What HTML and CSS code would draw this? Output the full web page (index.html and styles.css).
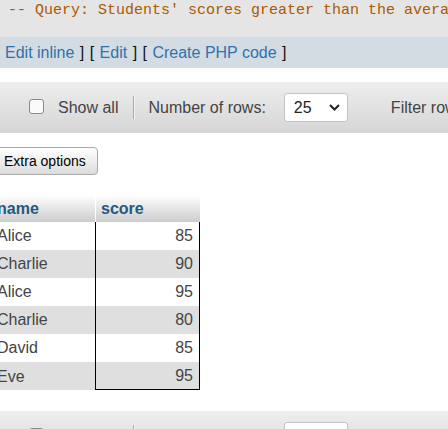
FILE: index.html
```html
<!DOCTYPE html>
<html>
<head>
<meta charset="utf-8">
<link rel="stylesheet" href="styles.css">
</head>
<body>
<div class="query"><code>-- Query: Students' scores greater than the average score</code></div>
<div class="links"><a href="#">Edit inline</a> ] [ <a href="#">Edit</a> ] [ <a href="#">Create PHP code</a> ]</div>

<div class="toolbar">
  <span class="check"></span>
  <span class="label">Show all</span>
  <span class="sep"></span>
  <span class="label">Number of rows:</span>
  <span class="select"><span>25</span><svg width="11" height="7" viewBox="0 0 11 7"><path d="M1 1 L5.5 5.5 L10 1" fill="none" stroke="#222" stroke-width="2"/></svg></span>
  <span class="label filter">Filter rows:</span>
</div>

<button class="extra">Extra options</button>

<table class="results">
  <thead>
    <tr><th class="name">name</th><th class="score">score</th></tr>
  </thead>
  <tbody>
    <tr><td class="name">Alice</td><td class="score">85</td></tr>
    <tr class="odd"><td class="name">Charlie</td><td class="score">90</td></tr>
    <tr><td class="name">Alice</td><td class="score">95</td></tr>
    <tr class="odd"><td class="name">Charlie</td><td class="score">80</td></tr>
    <tr><td class="name">David</td><td class="score">85</td></tr>
    <tr class="odd last"><td class="name">Eve</td><td class="score">95</td></tr>
  </tbody>
</table>

<div class="toolbar bottom">
  <span class="check"></span>
  <span class="label">Show all</span>
  <span class="sep"></span>
  <span class="label">Number of rows:</span>
  <span class="select"><span>25</span><svg width="11" height="7" viewBox="0 0 11 7"><path d="M1 1 L5.5 5.5 L10 1" fill="none" stroke="#222" stroke-width="2"/></svg></span>
  <span class="label filter">Filter rows:</span>
</div>
</body>
</html>
```

FILE: styles.css
```css
html, body {
  margin: 0;
  padding: 0;
  background: #fff;
  overflow: hidden;
}
body {
  font-family: "Liberation Sans", Arial, sans-serif;
  font-size: 16px;
  color: #444;
  white-space: nowrap;
}
.query {
  background: #e5e5e5;
  height: 37px;
  padding-left: 8px;
  box-sizing: border-box;
}
.query code {
  font-family: "Liberation Mono", "DejaVu Sans Mono", monospace;
  font-size: 15px;
  line-height: 18px;
  color: #aa5a00;
}
.links {
  background: #d3dce3;
  height: 31px;
  box-sizing: border-box;
  padding: 6px 5px 0 5px;
  line-height: 20px;
  color: #111;
  word-spacing: 1px;
}
.links a {
  color: #2f72ad;
  text-decoration: none;
  word-spacing: 0;
}
.toolbar {
  margin-top: 14px;
  height: 51px;
  display: flex;
  align-items: center;
  padding-left: 29px;
  background: linear-gradient(to bottom, #eeeeee, #d5d5d5);
  color: #444;
}
.toolbar > * {
  flex-shrink: 0;
}
.toolbar.bottom {
  margin-top: 21px;
}
.check {
  width: 15px;
  height: 15px;
  box-sizing: border-box;
  border: 1px solid #8a8a8a;
  border-radius: 3px;
  background: #fafafa;
  margin-right: 14px;
  margin-top: -2px;
}
.sep {
  width: 1px;
  height: 23px;
  background: #aaa;
  border-right: 1px solid #f4f4f4;
  margin: 0 13px 0 15px;
}
.select {
  display: flex;
  align-items: center;
  width: 64px;
  height: 29px;
  box-sizing: border-box;
  border: 1px solid #c4c4c4;
  border-radius: 3px;
  background: #fff;
  padding: 0 7px 0 9px;
  margin-left: 18px;
  color: #222;
}
.select svg {
  margin-left: auto;
}
.filter {
  margin-left: 43px;
}
.extra {
  display: block;
  margin: 14px 0 0 -5px;
  height: 28px;
  padding: 0 11px 0 8px;
  font-family: "Liberation Sans", Arial, sans-serif;
  font-size: 14px;
  color: #000;
  border: 1px solid #aaa;
  border-radius: 4px;
  background: linear-gradient(to bottom, #ffffff, #dcdcdc);
}
.results {
  margin: 20px 0 0 -8px;
  border-collapse: separate;
  border-spacing: 0;
}
.results th {
  height: 27px;
  line-height: 27px;
  padding: 0 5px;
  text-align: left;
  color: #235a81;
  font-weight: bold;
  background: linear-gradient(to bottom, #ffffff, #cccccc);
  box-sizing: border-box;
}
.results th.name {
  width: 103px;
}
.results th.score {
  width: 105px;
  border-left: 1px solid #fff;
}
.results td {
  height: 28px;
  line-height: 28px;
  padding: 0 5px;
  box-sizing: border-box;
  color: #444;
}
.results td.score {
  text-align: right;
  padding-right: 6px;
  border-left: 1px solid #000;
  border-right: 1px solid #000;
}
.results tr.odd td {
  background: #dfdfdf;
}
.results tr.last td {
  line-height: 27px;
}
.results tr.last td.score {
  border-bottom: 1px solid #000;
}
```
